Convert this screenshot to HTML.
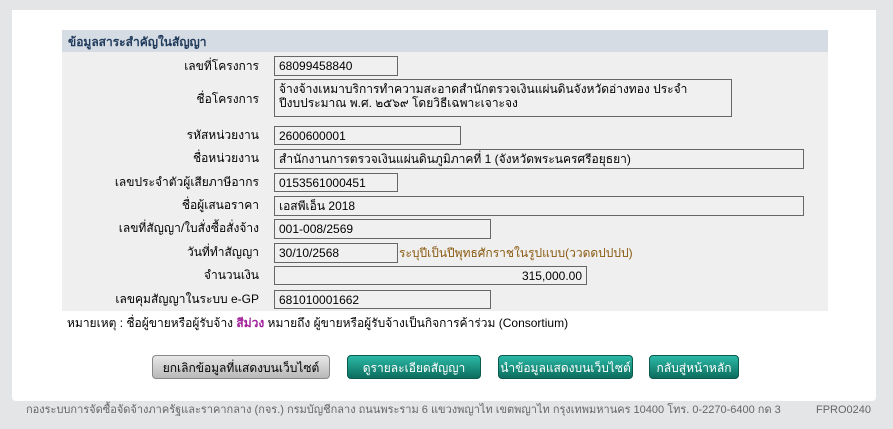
<!DOCTYPE html>
<html><head><meta charset="utf-8"><style>
body{margin:0;width:893px;height:429px;background:#e4e5e7;font-family:"Liberation Sans","DejaVu Sans",sans-serif;font-size:12px;color:#000;position:relative;overflow:hidden;line-height:14px}
.panel{position:absolute;left:12px;top:10px;width:864px;height:391px;background:#fff;border-radius:0 0 4px 4px}
.hdr{position:absolute;left:62px;top:30px;width:766px;height:22px;background:#d5dce4;color:#1f3a5a;font-weight:bold;font-size:12px;line-height:24px;box-sizing:border-box;padding-left:6px}
.body{position:absolute;left:62px;top:52px;width:766px;height:259px;background:#efefef}
.lbl{position:absolute;right:634px;text-align:right;white-space:nowrap}
.in{position:absolute;left:274px;box-sizing:border-box;border:1px solid #666;background:#f0f0f0;padding:2px 4px;white-space:nowrap;line-height:14px}
.note{position:absolute;left:67px;top:316px}
.btn{position:absolute;top:355px;height:24px;border-radius:4px;text-align:center;line-height:24px;font-size:12px;box-sizing:border-box}
.g{background:linear-gradient(#e8e8e8,#b8b8b8);border:1px solid #888;color:#000}
.t{background:linear-gradient(#2cb9a6,#0b6d5e);border:1px solid #0a5a4d;color:#fff}
.foot{position:absolute;left:26px;top:403px;color:#666;font-size:11px}
</style></head><body>
<div class="panel"></div>
<div class="hdr">ข้อมูลสาระสำคัญในสัญญา</div>
<div class="body"></div>
<div class="lbl" style="top:59px">เลขที่โครงการ</div><div class="in" style="top:56px;width:124px;height:20px">68099458840</div>
<div class="lbl" style="top:92px">ชื่อโครงการ</div><div class="in" style="top:79px;width:458px;height:38px;white-space:normal;padding-right:2px">จ้างจ้างเหมาบริการทำความสะอาดสำนักตรวจเงินแผ่นดินจังหวัดอ่างทอง ประจำ<br>ปีงบประมาณ พ.ศ. ๒๕๖๙ โดยวิธีเฉพาะเจาะจง</div>
<div class="lbl" style="top:128px">รหัสหน่วยงาน</div><div class="in" style="top:126px;width:187px;height:19px">2600600001</div>
<div class="lbl" style="top:151px">ชื่อหน่วยงาน</div><div class="in" style="top:149px;width:530px;height:20px">สำนักงานการตรวจเงินแผ่นดินภูมิภาคที่ 1 (จังหวัดพระนครศรีอยุธยา)</div>
<div class="lbl" style="top:175px">เลขประจำตัวผู้เสียภาษีอากร</div><div class="in" style="top:173px;width:124px;height:19px">0153561000451</div>
<div class="lbl" style="top:198px">ชื่อผู้เสนอราคา</div><div class="in" style="top:196px;width:530px;height:20px">เอสพีเอ็น 2018</div>
<div class="lbl" style="top:221px">เลขที่สัญญา/ใบสั่งซื้อสั่งจ้าง</div><div class="in" style="top:219px;width:217px;height:20px">001-008/2569</div>
<div class="lbl" style="top:245px">วันที่ทำสัญญา</div><div class="in" style="top:243px;width:124px;height:20px">30/10/2568</div>
<div style="position:absolute;left:399px;top:246px;color:#8a5a10">ระบุปีเป็นปีพุทธศักราชในรูปแบบ(ววดดปปปป)</div>
<div class="lbl" style="top:268px">จำนวนเงิน</div><div class="in" style="top:266px;width:313px;height:19px;text-align:right">315,000.00</div>
<div class="lbl" style="top:292px">เลขคุมสัญญาในระบบ e-GP</div><div class="in" style="top:290px;width:217px;height:19px">681010001662</div>
<div class="note">หมายเหตุ : ชื่อผู้ขายหรือผู้รับจ้าง <b style="color:#a0209a">สีม่วง</b> หมายถึง ผู้ขายหรือผู้รับจ้างเป็นกิจการค้าร่วม (Consortium)</div>
<div class="btn g" style="left:152px;width:178px">ยกเลิกข้อมูลที่แสดงบนเว็บไซต์</div>
<div class="btn t" style="left:347px;width:134px">ดูรายละเอียดสัญญา</div>
<div class="btn t" style="left:498px;width:135px">นำข้อมูลแสดงบนเว็บไซต์</div>
<div class="btn t" style="left:649px;width:90px">กลับสู่หน้าหลัก</div>
<div class="foot">กองระบบการจัดซื้อจัดจ้างภาครัฐและราคากลาง (กจร.) กรมบัญชีกลาง ถนนพระราม 6 แขวงพญาไท เขตพญาไท กรุงเทพมหานคร 10400 โทร. 0-2270-6400 กด 3</div>
<div class="foot" style="left:816px">FPRO0240</div>
</body></html>
